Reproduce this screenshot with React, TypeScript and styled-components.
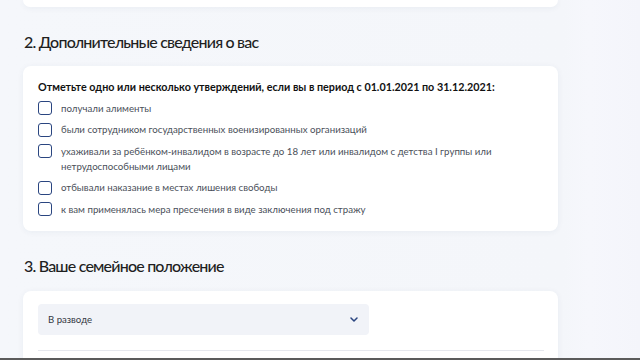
import React from "react";
import styled, { createGlobalStyle } from "styled-components";

const Global = createGlobalStyle`
  html, body { margin: 0; padding: 0; }
  body {
    background: #f4f6fa;
    font-family: Lato, "Noto Sans", sans-serif;
    overflow: hidden;
  }
`;

const Page = styled.div`
  position: relative;
  width: 640px;
  height: 360px;
  overflow: hidden;
  background: linear-gradient(90deg, #f5f7fb 0%, #f4f6fa 88%, #f6f7fc 92%, #f4f5fb 100%);
`;

const Column = styled.div`
  width: 535px;
  margin-left: 23px;
  display: flex;
  flex-direction: column;
`;

const Card = styled.div<{ $tail?: boolean }>`
  background: #ffffff;
  border-radius: ${(p) => (p.$tail ? "0 0 8px 8px" : "8px")};
  box-shadow: 0 1px 6px rgba(40, 60, 110, 0.06);
  ${(p) => (p.$tail ? "height: 7px;" : "")}
`;

const SectionHead = styled.h2<{ $top: number; $bottom: number }>`
  margin: ${(p) => p.$top}px 0 ${(p) => p.$bottom}px 0;
  font-family: Lato, "Noto Sans", sans-serif;
  font-size: 16px;
  line-height: 20px;
  font-weight: 500;
  letter-spacing: -0.8px;
  color: #1f1f1f;
  padding-left: 1px;
`;

const CardBody = styled.div`
  padding: 13px 15px 14px 15px;
  display: flex;
  flex-direction: column;
`;

const Prompt = styled.div`
  font-size: 10.75px;
  line-height: 16px;
  font-weight: 700;
  color: #111;
  margin-bottom: 6px;
`;

const List = styled.div`
  display: flex;
  flex-direction: column;
  gap: 7px;
`;

const Item = styled.label`
  display: flex;
  align-items: flex-start;
  gap: 9px;
`;

const Box = styled.span`
  flex: none;
  width: 14px;
  height: 14px;
  box-sizing: border-box;
  border: 1.7px solid #2a4580;
  border-radius: 3px;
  background: #fff;
`;

const ItemText = styled.span`
  font-size: 9.7px;
  line-height: 15px;
  color: #4a4f59;
  margin-top: -0.5px;
  max-width: 450px;
`;

const SelectBody = styled.div`
  padding: 13px 14px 0 15px;
  height: 70px;
  display: flex;
  flex-direction: column;
`;

const Select = styled.div`
  width: 331px;
  height: 31px;
  box-sizing: border-box;
  background: #f1f3f8;
  border-radius: 4px;
  display: flex;
  align-items: center;
  justify-content: space-between;
  padding: 0 11px 0 10px;
`;

const SelectText = styled.span`
  font-size: 9.6px;
  color: #333843;
`;

const Divider = styled.div`
  margin-top: 15px;
  height: 1px;
  background: #e6e8ee;
`;

const BottomBar = styled.div`
  position: absolute;
  left: 0;
  right: 0;
  bottom: 0;
  height: 2px;
  background: #5b5b5b;
`;

const items = [
  "получали алименты",
  "были сотрудником государственных военизированных организаций",
  "ухаживали за ребёнком-инвалидом в возрасте до 18 лет или инвалидом с детства I группы или нетрудоспособными лицами",
  "отбывали наказание в местах лишения свободы",
  "к вам применялась мера пресечения в виде заключения под стражу",
];

export default function App() {
  return (
    <>
      <Global />
      <Page>
        <Column>
          <Card $tail />
          <SectionHead $top={25} $bottom={14}>2. Дополнительные сведения о вас</SectionHead>
          <Card>
            <CardBody>
              <Prompt>
                Отметьте одно или несколько утверждений, если вы в период с 01.01.2021 по 31.12.2021:
              </Prompt>
              <List>
                {items.map((t) => (
                  <Item key={t}>
                    <Box />
                    <ItemText>{t}</ItemText>
                  </Item>
                ))}
              </List>
            </CardBody>
          </Card>
          <SectionHead $top={25} $bottom={15}>3. Ваше семейное положение</SectionHead>
          <Card>
            <SelectBody>
              <Select>
                <SelectText>В разводе</SelectText>
                <svg width="8" height="5" viewBox="0 0 8 5" fill="none">
                  <path d="M1 1l3 3 3-3" stroke="#2a4580" strokeWidth="1.5" strokeLinecap="round" strokeLinejoin="round" />
                </svg>
              </Select>
              <Divider />
            </SelectBody>
          </Card>
        </Column>
        <BottomBar />
      </Page>
    </>
  );
}
